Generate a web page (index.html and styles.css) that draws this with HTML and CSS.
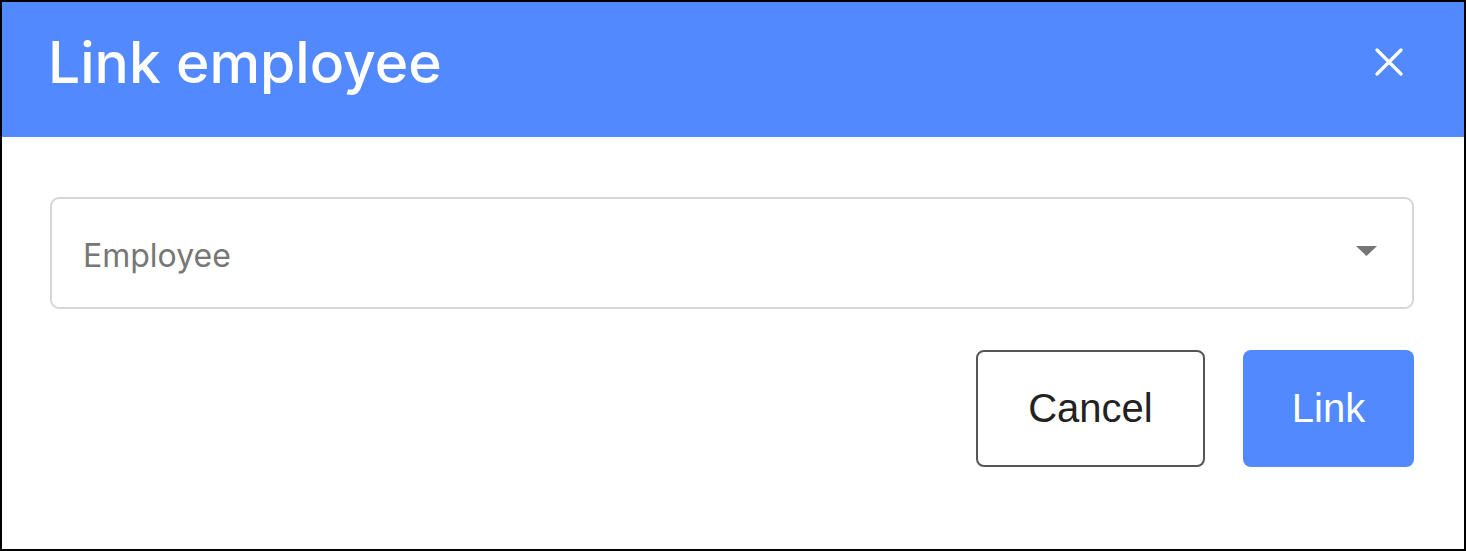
FILE: index.html
```html
<!DOCTYPE html>
<html lang="en">
<head>
<meta charset="utf-8">
<title>Link employee</title>
<link rel="stylesheet" href="styles.css">
</head>
<body>
<div class="dialog">
  <header class="dialog-header">
    <h1 class="dialog-title">Link employee</h1>
    <button class="close-btn" aria-label="Close">
      <svg width="28" height="28" viewBox="0 0 28 28"><path d="M2 2 L26 26 M26 2 L2 26" stroke="#fff" stroke-width="3.2" stroke-linecap="round" fill="none"/></svg>
    </button>
  </header>
  <div class="dialog-body">
    <div class="select">
      <span class="select-placeholder">Employee</span>
      <svg class="select-arrow" width="21" height="10" viewBox="0 0 21 10"><polygon points="0,0 21,0 10.5,10" fill="#757575"/></svg>
    </div>
    <div class="actions">
      <button class="btn btn-outline">Cancel</button>
      <button class="btn btn-primary">Link</button>
    </div>
  </div>
</div>
</body>
</html>
```

FILE: styles.css
```css
* { box-sizing: border-box; }
html, body { margin: 0; padding: 0; background: #fff; }
.dialog {
  width: 1466px;
  height: 551px;
  border: 2px solid #000;
  display: flex;
  flex-direction: column;
  background: #fff;
}
.dialog-header {
  height: 135px;
  background: #5289ff;
  display: flex;
  align-items: center;
  justify-content: space-between;
  padding: 0 61px 0 46px;
  flex-shrink: 0;
}
.dialog-title {
  margin: 0;
  font-family: "Inter", "Noto Sans", sans-serif;
  font-weight: 500;
  font-size: 57px;
  color: #fff;
  line-height: 1;
  position: relative;
  top: -7px;
}
.close-btn {
  background: none;
  border: 0;
  padding: 0;
  width: 28px;
  height: 28px;
  display: flex;
  cursor: pointer;
  position: relative;
  top: -8px;
}
.dialog-body {
  padding: 60px 50px 0 48px;
  display: flex;
  flex-direction: column;
}
.select {
  height: 112px;
  border: 2px solid #d6d6d6;
  border-radius: 9px;
  display: flex;
  align-items: center;
  justify-content: space-between;
  padding: 5px 35px 0 31px;
}
.select-arrow {
  position: relative;
  top: -5px;
}
.select-placeholder {
  font-family: "Inter", "Noto Sans", sans-serif;
  font-size: 32px;
  color: #777;
}
.actions {
  margin-top: 41px;
  display: flex;
  justify-content: flex-end;
  gap: 38px;
}
.btn {
  height: 117px;
  border-radius: 8px;
  font-family: "Liberation Sans", Arial, sans-serif;
  font-size: 40px;
  cursor: pointer;
}
.btn-outline {
  width: 229px;
  background: #fff;
  border: 2px solid #555;
  color: #222;
}
.btn-primary {
  width: 171px;
  background: #5289ff;
  border: 0;
  color: #fff;
}
```
